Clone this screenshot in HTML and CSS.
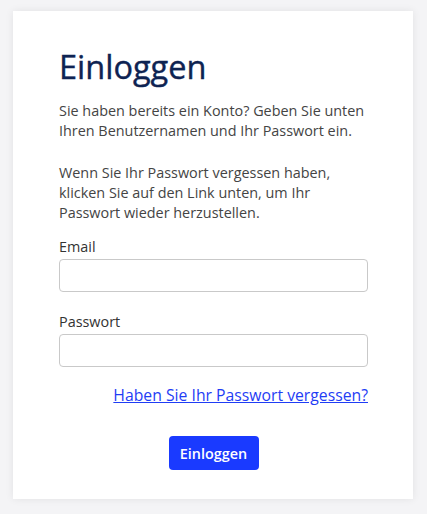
FILE: index.html
```html
<!DOCTYPE html>
<html lang="de">
<head>
<meta charset="utf-8">
<link rel="stylesheet" href="styles.css">
</head>
<body>
<div class="page">
  <div class="card">
    <h1 class="title">Einloggen</h1>
    <p class="text">Sie haben bereits ein Konto? Geben Sie unten Ihren Benutzernamen und Ihr Passwort ein.</p>
    <p class="text text-last">Wenn Sie Ihr Passwort vergessen haben, klicken Sie auf den Link unten, um Ihr Passwort wieder herzustellen.</p>
    <form class="form">
      <label class="label" for="email">Email</label>
      <input class="input" id="email" type="text">
      <label class="label label-second" for="pw">Passwort</label>
      <input class="input" id="pw" type="password">
      <div class="link-row"><a class="link" href="#">Haben Sie Ihr Passwort vergessen?</a></div>
      <div class="btn-row"><button class="btn" type="button">Einloggen</button></div>
    </form>
  </div>
</div>
</body>
</html>
```
FILE: styles.css
```css
html, body {
  margin: 0;
  padding: 0;
  background: #f4f4f6;
  font-family: "Open Sans", "Noto Sans", sans-serif;
}
.page {
  padding: 11px 14px 15px 13px;
}
.card {
  width: 400px;
  height: 488px;
  box-sizing: border-box;
  background: #fff;
  box-shadow: 0 0 8px rgba(0, 0, 0, 0.08);
  padding: 37px 45px 0 46px;
}
.title {
  margin: 0 0 15px 0;
  font-size: 32.5px;
  font-weight: 400;
  line-height: 38px;
  color: #0e2352;
  -webkit-text-stroke: 0.4px #0e2352;
}
.text {
  margin: 0 0 22px 0;
  font-size: 14.4px;
  line-height: 20px;
  color: #444;
}
.text-last {
  margin-bottom: 14px;
}
.form {
  display: flex;
  flex-direction: column;
}
.label {
  font-size: 14.4px;
  line-height: 20px;
  color: #333;
  margin-bottom: 2px;
}
.label-second {
  margin-top: 20px;
  margin-bottom: 2px;
}
.input {
  height: 33px;
  box-sizing: border-box;
  border: 1px solid #c9c9c9;
  border-radius: 4px;
  background: #fff;
  margin: 0;
}
.link-row {
  display: flex;
  justify-content: flex-end;
  margin-top: 17px;
}
.link {
  font-size: 15.75px;
  line-height: 22px;
  color: #1f3df5;
  text-decoration: underline;
}
.btn-row {
  display: flex;
  justify-content: center;
  margin-top: 30px;
}
.btn {
  width: 90px;
  height: 34px;
  background: #1a3aff;
  color: #fff;
  border: none;
  border-radius: 4px;
  font-family: "Open Sans", sans-serif;
  font-size: 14.4px;
  font-weight: 600;
  padding: 0;
}
```
